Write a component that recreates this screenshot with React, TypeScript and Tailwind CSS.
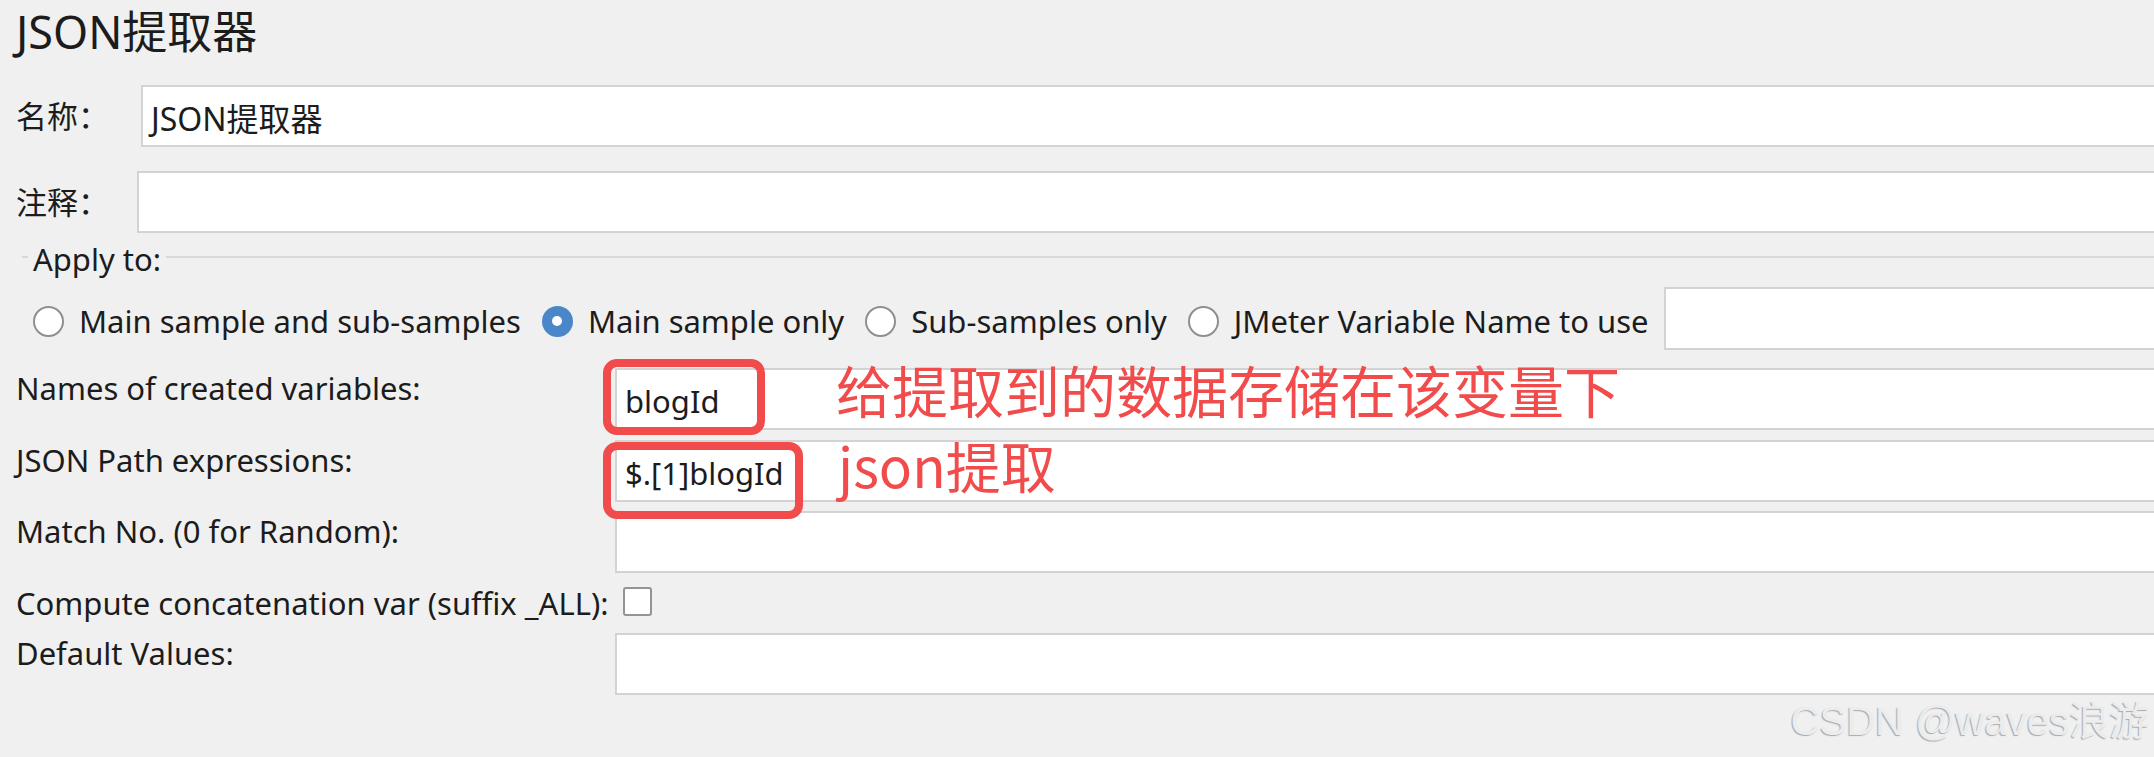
const labelCls = "text-[31px] leading-[37px] whitespace-nowrap";

const Field = ({ value, className = "" }: { value?: string; className?: string }) => (
  <div
    className={`flex h-[62px] flex-1 items-center border-2 border-r-0 border-[#d3d3d3] bg-white pl-[8px] pt-[4px] text-[31px] leading-[37px] whitespace-nowrap ${className}`}
  >
    {value}
  </div>
);

const Radio = ({ checked, label }: { checked?: boolean; label: string }) => (
  <label className="flex items-center gap-[15px]">
    {checked ? (
      <span className="flex h-[31px] w-[31px] items-center justify-center rounded-full bg-[#4a87c8]">
        <span className="h-[10px] w-[10px] rounded-full bg-white" />
      </span>
    ) : (
      <span className="h-[31px] w-[31px] rounded-full border-2 border-[#8f8f8f] bg-white" />
    )}
    <span className={labelCls}>{label}</span>
  </label>
);

const Row = ({ label, value }: { label: string; value?: string }) => (
  <div className="flex items-start">
    <span className={`ml-[16px] w-[599px] pt-[2px] ${labelCls}`}>{label}</span>
    <Field value={value} />
  </div>
);

export default function App() {
  return (
    <div className="relative h-[757px] w-full overflow-hidden bg-[#f0f0f0] font-['Noto_Sans','Noto_Sans_CJK_SC',sans-serif] text-[#1c1c1c]">
      <div className="h-[60px] pl-[16px] pt-[2px] text-[45px] leading-[60px]">JSON提取器</div>

      <div className="mt-[25px] flex h-[62px] items-center">
        <span className={`w-[141px] pl-[16px] ${labelCls}`}>名称：</span>
        <Field value="JSON提取器" className="text-[32px]" />
      </div>

      <div className="mt-[25px] flex h-[60px] items-center">
        <span className={`w-[137px] pl-[16px] ${labelCls}`}>注释：</span>
        <Field className="h-[60px]" />
      </div>

      {/* Apply to group */}
      <div className="mt-[9px]">
        <div className="flex h-[37px] items-start">
          <div className="ml-[22px] mt-[15px] h-[2px] w-[6px] bg-[#d8d8d8]" />
          <span className={`px-[5px] ${labelCls}`}>Apply to:</span>
          <div className="mt-[15px] h-[2px] flex-1 bg-[#d8d8d8]" />
        </div>
        <div className="mt-[9px] flex h-[63px] items-center pl-[33px]">
          <div className="flex items-center gap-[21px] pt-[5px]">
            <Radio label="Main sample and sub-samples" />
            <Radio checked label="Main sample only" />
            <Radio label="Sub-samples only" />
            <Radio label="JMeter Variable Name to use" />
          </div>
          <div className="ml-[15px] flex h-[63px] flex-1 border-2 border-r-0 border-[#d3d3d3] bg-white" />
        </div>
      </div>

      <div className="mt-[18px] flex flex-col">
        <Row label="Names of created variables:" value="blogId" />
        <div className="mt-[10px]">
          <Row label="JSON Path expressions:" value="$.[1]blogId" />
        </div>
        <div className="mt-[9px]">
          <Row label="Match No. (0 for Random):" />
        </div>
        <div className="flex h-[60px] items-start">
          <span className={`ml-[16px] w-[599px] pt-[12px] ${labelCls}`}>
            Compute concatenation var (suffix _ALL):
          </span>
          <span className="ml-[8px] mt-[14px] h-[29px] w-[29px] rounded-[3px] border-2 border-[#949494] bg-white" />
        </div>
        <Row label="Default Values:" />
      </div>

      {/* annotations */}
      <div className="absolute left-[603px] top-[359px] h-[76px] w-[162px] rounded-[14px] border-[8px] border-[#f14b4b]" />
      <div className="absolute left-[603px] top-[442px] h-[77px] w-[200px] rounded-[14px] border-[8px] border-[#f14b4b]" />
      <div className="absolute left-[836px] top-[361px] font-['Noto_Sans_CJK_SC',sans-serif] text-[56px] leading-[56px] whitespace-nowrap text-[#f14b4b]">
        给提取到的数据存储在该变量下
      </div>
      <div className="absolute left-[838px] top-[437px] font-['Noto_Sans_CJK_SC',sans-serif] text-[55px] leading-[55px] whitespace-nowrap text-[#f14b4b]">
        json提取
      </div>

      <div className="absolute right-[5px] top-[701px] font-['Liberation_Sans','Noto_Sans_CJK_SC',sans-serif] text-[40px] leading-[40px] whitespace-nowrap text-[#ececec] [text-shadow:-1px_1px_1px_#a9a9a9]">
        CSDN @waves浪游
      </div>
    </div>
  );
}
